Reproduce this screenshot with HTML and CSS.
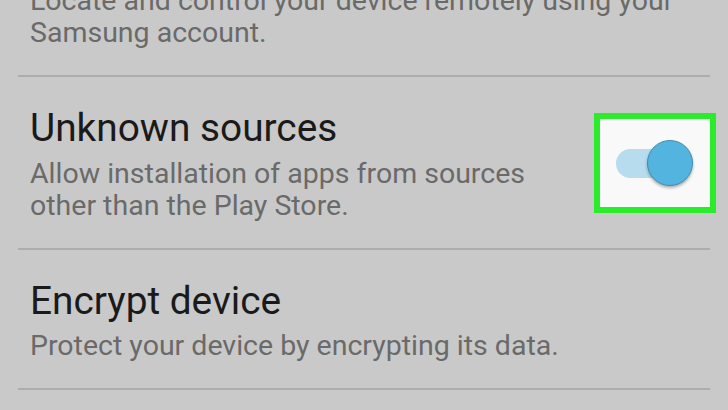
FILE: index.html
```html
<!DOCTYPE html>
<html lang="en">
<head>
<meta charset="utf-8">
<title>Security settings</title>
<link rel="stylesheet" href="styles.css">
</head>
<body>
<div class="list">
  <div class="item item-first">
    <div class="text">
      <div class="summary">Locate and control your device remotely using your<br>Samsung account.</div>
    </div>
  </div>
  <div class="item">
    <div class="text">
      <div class="title">Unknown sources</div>
      <div class="summary">Allow installation of apps from sources<br>other than the Play Store.</div>
    </div>
    <div class="highlight">
      <div class="switch"><span class="knob"></span></div>
    </div>
  </div>
  <div class="item">
    <div class="text">
      <div class="title">Encrypt device</div>
      <div class="summary">Protect your device by encrypting its data.</div>
    </div>
  </div>
</div>
</body>
</html>
```
FILE: styles.css
```css
html, body {
  margin: 0;
  padding: 0;
  background: #c9c9c9;
  overflow: hidden;
}
body {
  width: 728px;
  height: 410px;
  font-family: Roboto, "Liberation Sans", sans-serif;
}
.list {
  margin-top: -15px;
  padding: 0 18px 0 18px;
  display: flex;
  flex-direction: column;
}
.item {
  display: flex;
  align-items: center;
  justify-content: space-between;
  padding: 28px 0 26px 12px;
  border-bottom: 2px solid #adadad;
}
.item-first {
  padding-top: 0;
}
.text {
  display: flex;
  flex-direction: column;
  gap: 6.5px;
}
.title {
  font-size: 38.8px;
  line-height: 46px;
  color: #1a1a1a;
}
.summary {
  font-size: 28.5px;
  line-height: 32px;
  color: #6a6a6a;
}
.highlight {
  box-sizing: border-box;
  width: 122px;
  height: 100px;
  margin-right: -6px;
  border: 6px solid #2bec2b;
  background: #f9f9f9;
  display: flex;
  align-items: center;
  padding-left: 16px;
}
.switch {
  position: relative;
  width: 66px;
  height: 29px;
  border-radius: 15px;
  background: #b6dcee;
}
.knob {
  position: absolute;
  left: 31px;
  top: -9px;
  box-sizing: border-box;
  width: 46px;
  height: 46px;
  border-radius: 50%;
  background: #53b4e0;
  border: 1px solid #3f8db2;
  box-shadow: 0 2px 3px rgba(0, 0, 0, 0.3);
}
```
